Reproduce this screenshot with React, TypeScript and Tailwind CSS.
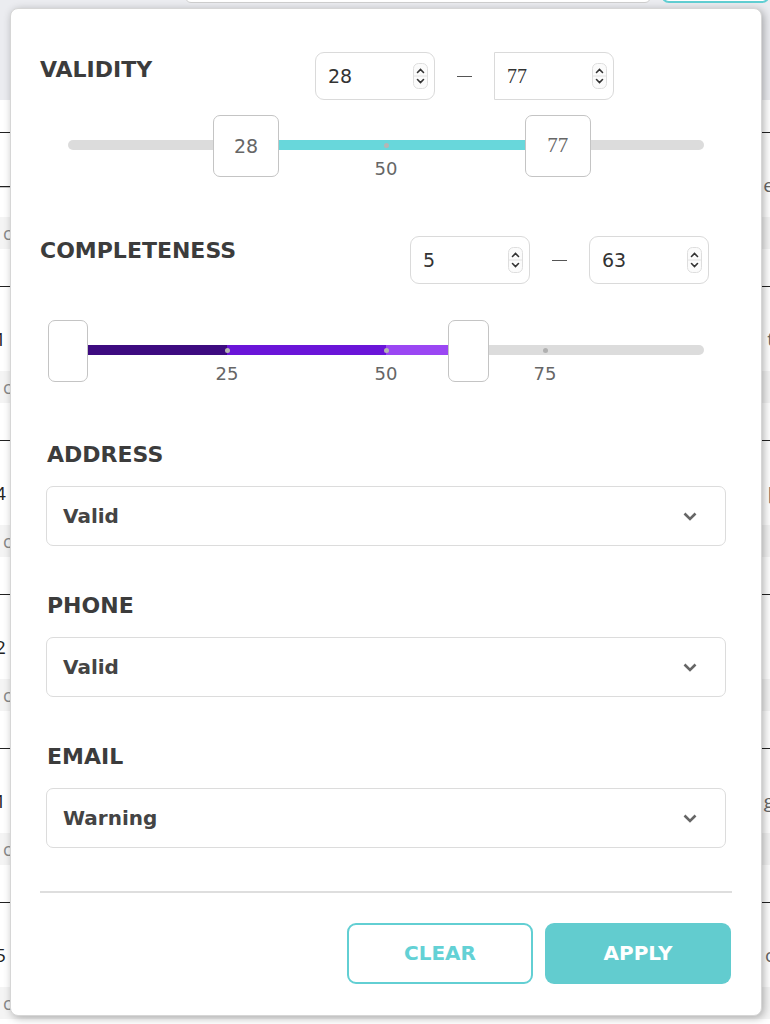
const sans = "font-['DejaVu_Sans',sans-serif]";

type Seg = { from: number; to: number; color: string };

const TRACK_W = 636;
const pos = (v: number) => (v / 100) * TRACK_W;

function Spinner() {
  return (
    <svg width="15" height="26" viewBox="0 0 15 26" className="shrink-0">
      <rect x="0.5" y="0.5" width="14" height="25" rx="5" fill="#fbfbfb" stroke="#dedede" />
      <line x1="1" y1="13" x2="14" y2="13" stroke="#e2e2e2" />
      <path d="M4.5 9.5 L7.5 6.5 L10.5 9.5" stroke="#333" strokeWidth="1.6" fill="none" strokeLinecap="round" />
      <path d="M4.5 16.5 L7.5 19.5 L10.5 16.5" stroke="#333" strokeWidth="1.6" fill="none" strokeLinecap="round" />
    </svg>
  );
}

function NumberBox({ value, serif, squareLeft }: { value: string; serif?: boolean; squareLeft?: boolean }) {
  return (
    <div
      className={`flex h-[48px] w-[120px] items-center justify-between border-[1.5px] border-[#dadada] bg-white pl-[12px] pr-[6px] ${
        squareLeft ? "rounded-r-[9px]" : "rounded-[9px]"
      }`}
    >
      <span
        className={`text-[19px] text-[#333] ${serif ? "font-['Liberation_Serif',serif] text-[20px]" : sans}`}
      >
        {value}
      </span>
      <Spinner />
    </div>
  );
}

function Dash() {
  return (
    <div className="flex w-[59px] items-center justify-center self-stretch">
      <div className="h-px w-[15px] bg-[#555]" />
    </div>
  );
}

function Slider({
  fills,
  handles,
  ticks,
}: {
  fills: Seg[];
  handles: { v: number; w: number; label?: string; serif?: boolean }[];
  ticks: { v: number; label: string; dot: string }[];
}) {
  return (
    <div className="relative ml-[57px] h-[62px] w-[636px]">
      <div className="absolute left-0 right-0 top-[25px] h-[10px] rounded-full bg-[#dcdcdc]" />
      {fills.map((f, i) => (
        <div
          key={i}
          className="absolute top-[25px] h-[10px]"
          style={{ left: pos(f.from), width: pos(f.to) - pos(f.from), background: f.color }}
        />
      ))}
      {ticks.map((t) => (
        <div key={t.label}>
          <div
            className="absolute top-[28px] h-[5px] w-[5px] rounded-full"
            style={{ left: pos(t.v) - 2.5, background: t.dot }}
          />
          <div
            className={`absolute top-[42px] w-[40px] text-center text-[18px] leading-[24px] text-[#666] ${sans}`}
            style={{ left: pos(t.v) - 20 }}
          >
            {t.label}
          </div>
        </div>
      ))}
      {handles.map((h, i) => (
        <div
          key={i}
          className="absolute top-0 flex h-[62px] items-center justify-center rounded-[7px] border-[1.5px] border-[#c4c4c4] bg-white"
          style={{ left: pos(h.v) - h.w / 2, width: h.w }}
        >
          {h.label && (
            <span
              className={`text-[#666] ${
                h.serif ? "font-['Liberation_Serif',serif] text-[21px]" : `${sans} text-[19px]`
              }`}
            >
              {h.label}
            </span>
          )}
        </div>
      ))}
    </div>
  );
}

function Chevron() {
  return (
    <svg width="14" height="9" viewBox="0 0 14 9">
      <path d="M1.5 1.5 L7 7 L12.5 1.5" stroke="#666" strokeWidth="2.6" fill="none" />
    </svg>
  );
}

function SelectField({ label, value, mt }: { label: string; value: string; mt: string }) {
  return (
    <div className={mt}>
      <div className="ml-[36px] text-[22px] font-bold leading-[28px] text-[#3c3c3c]">{label}</div>
      <div className="ml-[35px] mt-[17px] flex h-[60px] w-[680px] items-center justify-between rounded-[7px] border-[1.5px] border-[#dcdcdc] bg-white pl-[16px] pr-[28px]">
        <span className="text-[20px] font-bold text-[#444]">{value}</span>
        <Chevron />
      </div>
    </div>
  );
}

const rows = [
  { left: "—", right: "e" },
  { left: "1", right: "t" },
  { left: "4", right: "[" },
  { left: "2", right: "" },
  { left: "1", right: "g" },
  { left: "5", right: "c" },
];

function Background() {
  return (
    <div className="flex h-full flex-col font-['Open_Sans',sans-serif]">
      <div className="h-[100px] shrink-0 bg-[#ebecf0]">
        <div className="-mt-[40px] flex">
          <div className="ml-[185px] h-[43px] w-[473px] rounded-md border border-[#cfcfcf] bg-white" />
          <div className="ml-[10px] h-[43px] w-[110px] rounded-lg border-2 border-[#62cfd3] bg-white" />
        </div>
      </div>
      <div className="h-[32px] shrink-0 bg-white" />
      {rows.map((r, i) => (
        <div key={i} className="h-[154px] shrink-0 border-t border-[#222] bg-white">
          <div className="mt-[38px] flex h-[28px] items-center justify-between">
            <span className="-ml-[5px] text-[19px] text-[#222]">{r.left}</span>
            <span className="mr-[-4px] text-[19px] text-[#666]">{r.right}</span>
          </div>
          <div className="mt-[18px] flex h-[32px] items-center bg-[#f4f4f4]">
            <span className="ml-[3px] text-[18px] text-[#888]">c</span>
          </div>
        </div>
      ))}
    </div>
  );
}

export default function App() {
  return (
    <div className="relative h-[1024px] w-[770px] overflow-hidden bg-white">
      <Background />
      <div
        className={`absolute left-[10px] top-[8px] h-[1008px] w-[752px] rounded-[8px] border border-[#d6d6d6] bg-white shadow-[2px_2px_9px_rgba(0,0,0,0.3)] ${sans}`}
      >
        <div className="flex pl-[29px] pt-[43px]">
          <div className="mt-[4px] w-[275px] shrink-0 text-[22px] font-bold leading-[28px] text-[#3c3c3c]">
            VALIDITY
          </div>
          <NumberBox value="28" />
          <Dash />
          <NumberBox value="77" serif squareLeft />
        </div>
        <div className="mt-[15px]">
          <Slider
            fills={[{ from: 28, to: 77, color: "#68d7db" }]}
            handles={[
              { v: 28, w: 66, label: "28" },
              { v: 77, w: 66, label: "77", serif: true },
            ]}
            ticks={[{ v: 50, label: "50", dot: "#b5b5b5" }]}
          />
        </div>

        <div className="mt-[59px] flex pl-[29px]">
          <div className="mt-[1px] w-[370px] shrink-0 text-[22px] font-bold leading-[28px] text-[#3c3c3c]">
            COMPLETENESS
          </div>
          <NumberBox value="5" />
          <Dash />
          <NumberBox value="63" />
        </div>
        <div className="mt-[36px]">
          <Slider
            fills={[
              { from: 0, to: 25, color: "#3d0b80" },
              { from: 25, to: 50, color: "#6a14d8" },
              { from: 50, to: 63, color: "#9b47f3" },
            ]}
            handles={[
              { v: 0, w: 40 },
              { v: 63, w: 41 },
            ]}
            ticks={[
              { v: 25, label: "25", dot: "#b5b5b5" },
              { v: 50, label: "50", dot: "#b5b5b5" },
              { v: 75, label: "75", dot: "#b0b0b0" },
            ]}
          />
        </div>

        <SelectField label="ADDRESS" value="Valid" mt="mt-[59px]" />
        <SelectField label="PHONE" value="Valid" mt="mt-[46px]" />
        <SelectField label="EMAIL" value="Warning" mt="mt-[46px]" />

        <div className="ml-[29px] mt-[43px] h-[1.5px] w-[692px] bg-[#dedede]" />

        <div className="mt-[30px] flex justify-end gap-[12px] pr-[30px]">
          <button
            type="button"
            className="h-[61px] w-[186px] rounded-[9px] border-2 border-[#62cfd3] bg-white text-[20px] font-bold text-[#63d1d5]"
          >
            CLEAR
          </button>
          <button
            type="button"
            className="h-[61px] w-[186px] rounded-[9px] bg-[#62cccf] text-[20px] font-bold text-white"
          >
            APPLY
          </button>
        </div>
      </div>
    </div>
  );
}
